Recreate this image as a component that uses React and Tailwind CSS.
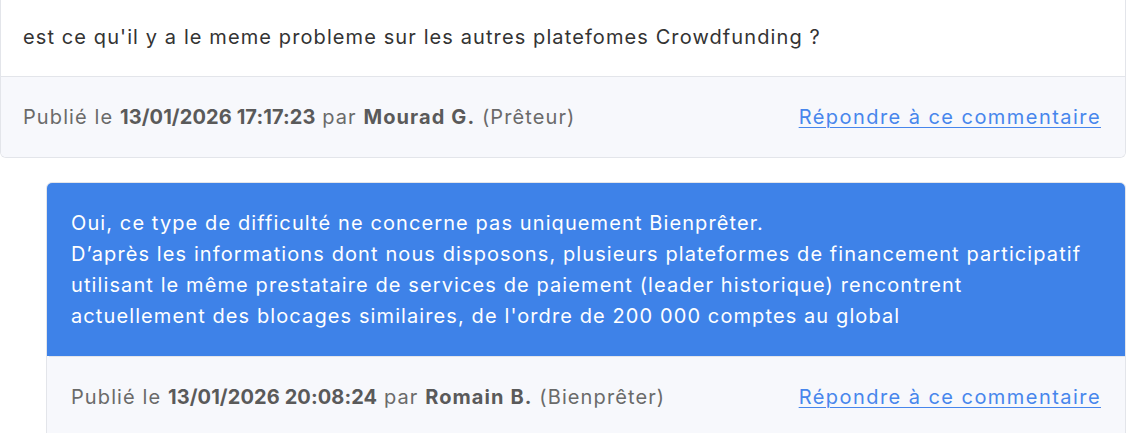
function Footer({ date, name, role }) {
  return (
    <div className="flex items-center justify-between bg-[#f7f8fc] border-t border-[#e3e5ea] pt-[25px] pb-[24px] pl-[22px] pr-6 text-[#6a6a6a]">
      <div>
        Publié le <span className="font-bold tracking-[0.1px] text-[#5a5a5a]">{date}</span> par{' '}
        <span className="font-bold text-[#5a5a5a]">{name}</span> ({role})
      </div>
      <a href="#" className="text-[#4786ec] tracking-[1.45px] underline underline-offset-[3px] decoration-1">
        Répondre à ce commentaire
      </a>
    </div>
  );
}

export default function App() {
  return (
    <div
      className="bg-white text-[20px] leading-[31px] tracking-[1.1px] pr-[21px]"
      style={{ fontFamily: 'Inter, "Open Sans", sans-serif' }}
    >
      <div className="border border-t-0 border-[#e3e5ea] rounded-b-md overflow-hidden">
        <div className="pt-[22px] pb-[23px] pl-[22px] pr-6 text-[#333]">
          est ce qu'il y a le meme probleme sur les autres platefomes Crowdfunding ?
        </div>
        <Footer date="13/01/2026 17:17:23" name="Mourad G." role="Prêteur" />
      </div>

      <div className="ml-[46px] mt-[24px] border border-[#e3e5ea] rounded-t-md overflow-hidden">
        <div className="bg-[#3e82e8] text-white pt-[25px] pb-[24px] pl-6 pr-6">
          <p>Oui, ce type de difficulté ne concerne pas uniquement Bienprêter.</p>
          <p>D’après les informations dont nous disposons, plusieurs plateformes de financement participatif</p>
          <p>utilisant le même prestataire de services de paiement (leader historique) rencontrent</p>
          <p>actuellement des blocages similaires, de l'ordre de 200 000 comptes au global</p>
        </div>
        <div className="pl-[2px] bg-[#f7f8fc]">
          <Footer date="13/01/2026 20:08:24" name="Romain B." role="Bienprêter" />
        </div>
      </div>
    </div>
  );
}
